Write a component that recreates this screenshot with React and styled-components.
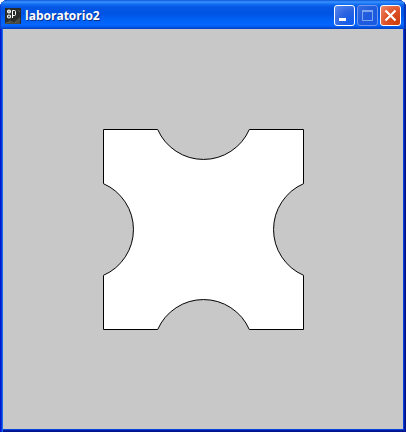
import React from "react";
import styled, { createGlobalStyle, css } from "styled-components";

const GlobalStyle = createGlobalStyle`
  * { box-sizing: border-box; }
  body { margin: 0; background: #fff; font-family: "Open Sans", "Noto Sans", sans-serif; }
`;

const Window = styled.main`
  display: flex;
  flex-direction: column;
  min-height: 100vh;
  padding: 0 3px 3px;
  border-radius: 8px 8px 0 0;
  overflow: hidden;
  background: #0831d9;
  box-shadow: inset 1px 0 #0019cf, inset 2px 0 #0831d9, inset 3px 0 #166aee,
    inset -1px 0 #00138c, inset -2px 0 #001ea0, inset 0 -1px #00138c,
    inset 0 -2px #001ea0, inset -3px 0 #0b3fdc, inset 0 -3px #0b3fdc;
`;

const TitleBar = styled.header`
  display: flex;
  align-items: center;
  gap: 4px;
  height: 29px;
  margin: 0 -3px;
  padding: 2px 5px 0;
  background: linear-gradient(
    to bottom,
    #0a58d8 0,
    #3c93ff 2px,
    #1470f4 4px,
    #0557e4 7px,
    #0054e3 14px,
    #0061f8 20px,
    #0566ff 25px,
    #0355e4 27px,
    #0140c6 29px
  );
  box-shadow: inset 1px 0 #0a3fd0, inset -2px 0 #0435b8;
`;

const Title = styled.h1`
  flex: 1;
  min-width: 0;
  margin: 0;
  color: #fff;
  font-size: 12px;
  font-weight: 700;
  line-height: 18px;
  white-space: nowrap;
  overflow: hidden;
  text-overflow: ellipsis;
  text-shadow: 1px 1px #0b2f8c;
`;

const Controls = styled.div`
  display: flex;
  gap: 2px;
`;

const tones = {
  blue: css`
    border-color: #fff;
    background: radial-gradient(circle at 90% 90%, #0d5cf0 0, #2a62e0 50%, #5b8af0 100%);
  `,
  muted: css`
    border-color: #6f97ee;
    background: linear-gradient(135deg, #376ce0, #1f5bdc 50%, #175ae4);
  `,
  red: css`
    border-color: #fff;
    background: radial-gradient(circle at 90% 90%, #cc3d0c 0, #dd4f25 50%, #ee8a6c 100%);
  `,
};

const ControlButton = styled.button`
  display: grid;
  place-items: center;
  width: 21px;
  height: 21px;
  padding: 0;
  border: 1px solid;
  border-radius: 3px;
  ${({ $tone }) => tones[$tone]}
`;

const Glyph = styled.svg`
  display: block;
  width: 19px;
  height: 19px;
`;

const AppIcon = styled.svg`
  display: block;
  flex: none;
  width: 16px;
  height: 16px;
`;

const Canvas = styled.section`
  flex: 1;
  background: #c8c8c8;
`;

const Sketch = styled.svg`
  display: block;
  width: 100%;
  height: auto;
`;

function ProcessingIcon() {
  return (
    <AppIcon viewBox="0 0 16 16" aria-hidden="true">
      <rect width="16" height="16" fill="#292b2b" />
      <path d="M0 15 5 12 9 14 15 9V16H0Z" fill="#464841" />
      <path d="M1 15 6 14M10 15 15 11M13 2 15 4" stroke="#5c5d48" />
      <circle cx="4" cy="3.5" r="1.5" fill="#999" stroke="#fff" strokeWidth="1.1" />
      <circle cx="4" cy="8.5" r="1.5" fill="#333" stroke="#fff" strokeWidth="1.2" />
      <path d="M7.5 10V2.5H9.5Q10.5 2.5 10.5 3.5V6.5Q10.5 7.5 9.5 7.5H7.5" fill="none" stroke="#fff" />
    </AppIcon>
  );
}

export default function App() {
  return (
    <>
      <GlobalStyle />
      <Window>
        <TitleBar>
          <ProcessingIcon />
          <Title>laboratorio2</Title>
          <Controls>
            <ControlButton $tone="blue" type="button" aria-label="Minimize">
              <Glyph viewBox="0 0 19 19">
                <rect x="4" y="12" width="7" height="3" fill="#fff" />
              </Glyph>
            </ControlButton>
            <ControlButton $tone="muted" type="button" aria-label="Maximize" disabled>
              <Glyph viewBox="0 0 19 19" fill="none" stroke="#7ea4f2">
                <rect x="4.5" y="4.5" width="10" height="10" />
                <path d="M4 5.5H15" />
              </Glyph>
            </ControlButton>
            <ControlButton $tone="red" type="button" aria-label="Close">
              <Glyph viewBox="0 0 19 19">
                <path d="M4.5 4.5 14.5 14.5M14.5 4.5 4.5 14.5" stroke="#fff" strokeWidth="2.2" />
              </Glyph>
            </ControlButton>
          </Controls>
        </TitleBar>
        <Canvas>
          <Sketch viewBox="0 0 400 400" role="img" aria-label="Square with a circular notch on each side">
            <path
              d="M100.5 100.5H154.7A50 50 0 0 0 246.3 100.5H300.5V154.7A50 50 0 0 0 300.5 246.3V300.5H246.3A50 50 0 0 0 154.7 300.5H100.5V246.3A50 50 0 0 0 100.5 154.7Z"
              fill="#fff"
              stroke="#000"
            />
          </Sketch>
        </Canvas>
      </Window>
    </>
  );
}
